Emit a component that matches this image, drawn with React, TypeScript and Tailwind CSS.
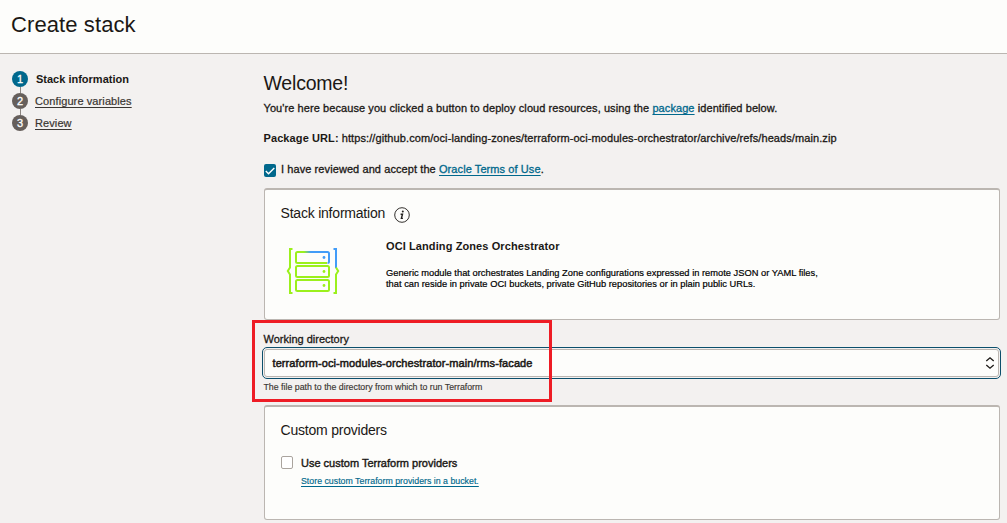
import type { ReactNode } from "react";

const link = "text-[#00688c] underline decoration-1 underline-offset-[1.5px] [text-decoration-skip-ink:none]";

function Step({ n, label, active }: { n: number; label: string; active?: boolean }) {
  return (
    <li className="flex h-[22px] items-start">
      <div className="flex w-4 flex-col items-center">
        <span
          className={
            "flex size-4 shrink-0 items-center justify-center rounded-full text-[11px] leading-none text-white [-webkit-text-stroke:0.3px] " +
            (active ? "bg-[#00688c]" : "bg-[#665f5b]")
          }
        >
          {n}
        </span>
        {n < 3 && <span className="h-1.5 w-px bg-[#8b8580]" />}
      </div>
      {active ? (
        <span className="ml-2 text-[11px] leading-4 font-bold">{label}</span>
      ) : (
        <a className="ml-[7px] text-[11px] leading-4 tracking-[0.1px] text-[#3a3632] underline decoration-1 underline-offset-[1.5px] [-webkit-text-stroke:0.2px] [text-decoration-skip-ink:none]">
          {label}
        </a>
      )}
    </li>
  );
}

function Card({ className, children }: { className: string; children: ReactNode }) {
  return (
    <section className={"rounded-[3px] border border-t-2 border-[#bbb6b1] bg-[#fdfdfb] pl-4 " + className}>
      {children}
    </section>
  );
}

function InfoIcon() {
  return (
    <svg className="mt-[3px] ml-[9px] size-4" viewBox="0 0 16 16" fill="none">
      <circle cx="8" cy="8" r="7.3" stroke="#33302d" strokeWidth="1" />
      <circle cx="8.8" cy="4.6" r="1" fill="#22201e" />
      <path d="M6.6 7.2h1.9L7.4 11.4h1.5" stroke="#22201e" strokeWidth="1.4" />
    </svg>
  );
}

function StackIcon() {
  return (
    <svg className="h-[46px] w-[54px]" viewBox="0 0 54 46" fill="none" strokeWidth="2">
      <defs>
        <linearGradient id="mix" gradientUnits="userSpaceOnUse" x1="14" y1="6" x2="24" y2="2">
          <stop offset="0.4" stopColor="#9bf01c" />
          <stop offset="1" stopColor="#429cf8" />
        </linearGradient>
      </defs>
      <path d="M6.5 1H4V19.5L1.8 23L4 26.5V45H6.5" stroke="#9bf01c" />
      <path d="M47.5 1H50V20" stroke="#429cf8" />
      <path d="M50 19.5L52.2 23L50 26.5V45H47.5" stroke="#9bf01c" />
      <rect x="10" y="18" width="33" height="11" rx="1.5" stroke="#9bf01c" />
      <rect x="10" y="32" width="33" height="11" rx="1.5" stroke="#9bf01c" />
      <path d="M19 4H11.5Q10 4 10 5.5V13.5Q10 15 11.5 15H41" stroke="#9bf01c" />
      <path d="M17 4H41.5Q43 4 43 5.5V13.5Q43 15 41.5 15" stroke="url(#mix)" />
      <circle cx="38" cy="9.5" r="1.4" fill="#429cf8" />
      <circle cx="38" cy="23.5" r="1.4" fill="#9bf01c" />
      <circle cx="38" cy="37.5" r="1.4" fill="#9bf01c" />
    </svg>
  );
}

export default function App() {
  return (
    <div className="flex h-[523px] w-[1007px] flex-col overflow-hidden bg-[#f3f1f0] font-['Liberation_Sans',Arial,sans-serif] text-[#1b1815]">
      <header className="h-[54px] shrink-0 border-b border-[#bbb6b1] bg-[#fdfdfb] pt-[13px] pl-[11px]">
        <h1 className="text-[22px] leading-6 tracking-[0.1px] whitespace-nowrap">Create stack</h1>
      </header>
      <div className="flex">
        <nav className="w-[263.5px] shrink-0 pt-[17px] pl-3">
          <ol>
            <Step n={1} label="Stack information" active />
            <Step n={2} label="Configure variables" />
            <Step n={3} label="Review" />
          </ol>
        </nav>
        <main className="w-[736.5px] shrink-0 pt-[17px] text-[11px] leading-4 whitespace-nowrap">
          <h2 className="h-[29px] text-[19.5px] leading-6 tracking-[-0.2px]">Welcome!</h2>
          <p className="h-[30px] tracking-[0.08px] [-webkit-text-stroke:0.3px]">
            You're here because you clicked a button to deploy cloud resources, using the{" "}
            <a className={link}>package</a> identified below.
          </p>
          <p className="h-[31px]">
            <b className="tracking-[0.1px]">Package URL:</b>{" "}
            <span className="tracking-[0.09px] [-webkit-text-stroke:0.3px]">https://github.com/oci-landing-zones/terraform-oci-modules-orchestrator/archive/refs/heads/main.zip</span>
          </p>
          <div className="flex h-[27px] items-start tracking-[0.085px] [-webkit-text-stroke:0.3px]">
            <span className="mt-[3px] mr-[5.5px] flex h-[13px] w-3 items-center justify-center rounded-[2px] bg-[#00688c]">
              <svg className="size-3" viewBox="0 0 12 12" fill="none">
                <path d="M1.8 6L4.5 8.7L10.3 3" stroke="white" strokeWidth="1.4" />
              </svg>
            </span>
            <span>
              I have reviewed and accept the <a className={link}>Oracle Terms of Use</a>.
            </span>
          </div>
          <Card className="h-[132px] pt-[14px]">
            <h3 className="flex h-[29px] text-[14px] leading-[18px] tracking-[-0.21px]">
              <span>Stack information</span>
              <InfoIcon />
            </h3>
            <div className="flex">
              <div className="w-[105.5px] shrink-0 pt-[15px] pl-[5px]">
                <StackIcon />
              </div>
              <div className="pt-[5px]">
                <h4 className="text-[11px] leading-4 font-bold tracking-[0.1px]">OCI Landing Zones Orchestrator</h4>
                <p className="mt-[14px] text-[9.3px] leading-[11px] tracking-[0.01px] text-black [-webkit-text-stroke:0.2px]">
                  Generic module that orchestrates Landing Zone configurations expressed in remote JSON or YAML files,
                  <br />
                  that can reside in private OCI buckets, private GitHub repositories or in plain public URLs.
                </p>
              </div>
            </div>
          </Card>
          <div className="relative h-[85px] pt-[11px]">
            <label className="block h-[18px] [-webkit-text-stroke:0.3px]">Working directory</label>
            <div className="mr-px flex h-[28px] items-center justify-between rounded-[3px] border border-[#bbb6b1] bg-[#fdfdfb] pr-[3.5px] pl-2 outline outline-offset-1 outline-[#0b4f6c]">
              <span className="tracking-[0.09px] [-webkit-text-stroke:0.5px]">terraform-oci-modules-orchestrator-main/rms-facade</span>
              <svg className="h-3.5 w-2.5" viewBox="0 0 10 14" fill="none" stroke="#1b1815" strokeWidth="1.3">
                <path d="M1.3 5L5 1.8L8.7 5M1.3 9L5 12.2L8.7 9" />
              </svg>
            </div>
            <p className="mt-1 text-[8.8px] leading-3 text-[#3a3632] [-webkit-text-stroke:0.15px]">The file path to the directory from which to run Terraform</p>
            <div className="absolute top-0 -left-3 h-[82px] w-[300px] border-3 border-[#ee1c25]" />
          </div>
          <Card className="h-[115px] pt-[14px]">
            <h3 className="h-[34px] text-[14px] leading-[18px] tracking-[-0.21px]">Custom providers</h3>
            <div className="flex items-start">
              <span className="mt-[1px] mr-[8.5px] h-[13px] w-3 rounded-[2px] border border-[#aaa49e] bg-white" />
              <div>
                <p className="h-5 [-webkit-text-stroke:0.4px]">Use custom Terraform providers</p>
                <a className={"block text-[8.8px] leading-3 [-webkit-text-stroke:0.15px] " + link}>Store custom Terraform providers in a bucket.</a>
              </div>
            </div>
          </Card>
        </main>
      </div>
    </div>
  );
}
